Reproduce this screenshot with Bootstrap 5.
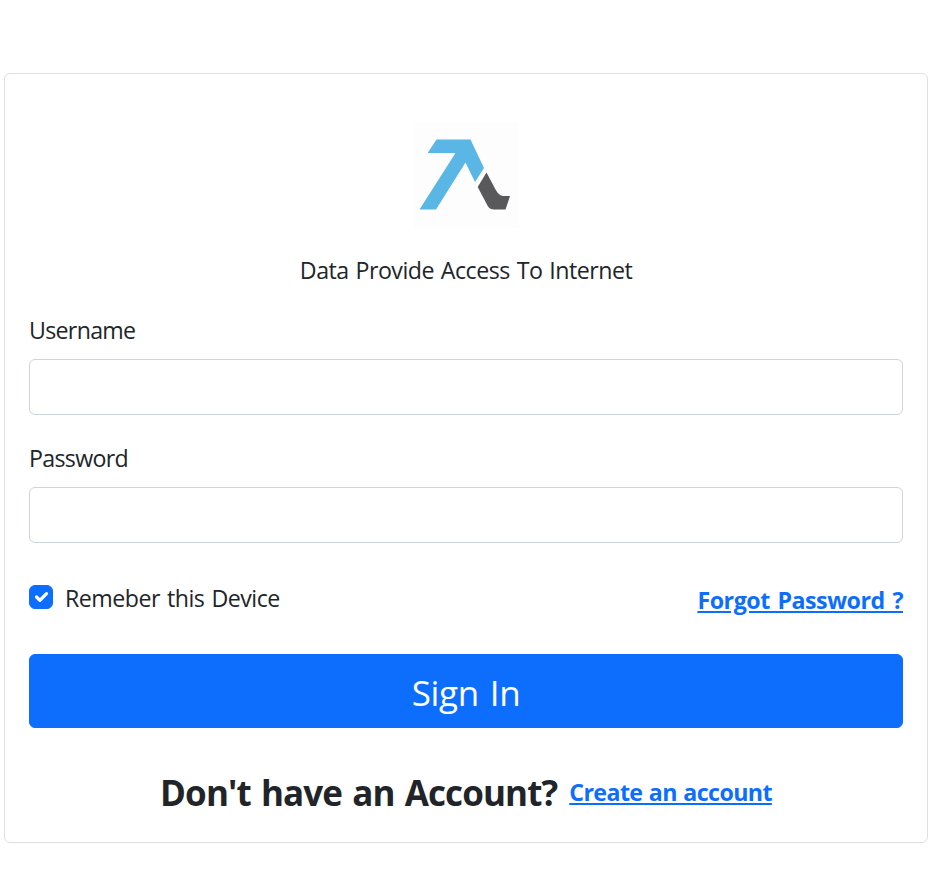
<!DOCTYPE html>
<html lang="en">
<head>
<meta charset="utf-8">
<meta name="viewport" content="width=device-width, initial-scale=1">
<title>Sign In</title>
<link href="https://cdn.jsdelivr.net/npm/bootstrap@5.3.0/dist/css/bootstrap.min.css" rel="stylesheet">
<style>
body { font-family: "Segoe UI", "Open Sans", "Noto Sans", sans-serif; font-size: 23.2px; line-height: 36px; }
.login-wrap { padding: 73px 2px 45px 4px; }
.login-card { height: 770px; border-radius: 6px; border-color: #dfdfdf; }
.login-card .card-body { padding: 49px 24px 24px; }
.brand-logo { width: 105px; height: 105px; }
.tagline { margin: 24px 0; letter-spacing: -.5px; word-spacing: 1.3px; }
.field-label { margin-bottom: 11px; letter-spacing: -.7px; }
.field-input { height: 56px; border-radius: 6px; border-color: #ced4da; font-size: 24px; }
.field-block { margin-bottom: 25px; }
.remember-row { margin: 37px 0 38px; height: 36px; }
.remember-box.form-check-input { width: 24px; height: 24px; margin: 5px 12px 0 0; border-radius: 6px; }
.remember-text { letter-spacing: -.5px; word-spacing: 1.5px; }
.forgot-link { margin-top: 2px; letter-spacing: -.45px; word-spacing: 2px; }
.sign-btn { height: 74px; border-radius: 6px; font-size: 35px; line-height: 56px; padding: 10px 8px 6px; letter-spacing: -.3px; word-spacing: 2px; }
.signup-row { margin-top: 38px; height: 54px; }
.signup-title { font-size: 35px; line-height: 54px; margin: 0; letter-spacing: -.9px; word-spacing: 2px; }
.signup-link { margin: -2px 0 0 12px; letter-spacing: -.6px; word-spacing: 1px; }
</style>
</head>
<body>
<main class="login-wrap">
  <div class="card login-card">
    <div class="card-body">
      <svg class="brand-logo d-block mx-auto" viewBox="0 0 105 105" role="img" aria-label="Logo">
        <rect width="105" height="105" fill="#fdfdfd"/>
        <path fill="#59b6e5" d="M22.500 16.500H56.500L70 45L61 59L51.500 39.500L22 86.500H5.500L41.500 30H13.700Z"/>
        <path fill="#59595b" d="M72.500 49.500L81.500 66.500Q85 73 89 73H96L91.500 86.500H80Q76 86.500 74 83.500L63.700 64Z"/>
      </svg>
      <p class="tagline text-center">Data Provide Access To Internet</p>
      <form>
        <div class="field-block">
          <label class="field-label d-block" for="user">Username</label>
          <input class="form-control field-input" id="user" type="text">
        </div>
        <div class="field-block">
          <label class="field-label d-block" for="pass">Password</label>
          <input class="form-control field-input" id="pass" type="password">
        </div>
        <div class="remember-row d-flex justify-content-between">
          <div class="d-flex">
            <input class="form-check-input remember-box flex-shrink-0" id="remember" type="checkbox" checked>
            <label class="remember-text" for="remember">Remeber this Device</label>
          </div>
          <a class="forgot-link fw-bold" href="#">Forgot Password ?</a>
        </div>
        <button class="btn btn-primary w-100 sign-btn d-block" type="button">Sign In</button>
        <div class="signup-row d-flex align-items-center justify-content-center">
          <p class="signup-title fw-bold">Don't have an Account?</p>
          <a class="signup-link fw-bold" href="#">Create an account</a>
        </div>
      </form>
    </div>
  </div>
</main>
<script src="https://cdn.jsdelivr.net/npm/bootstrap@5.3.0/dist/js/bootstrap.bundle.min.js"></script>
</body>
</html>
